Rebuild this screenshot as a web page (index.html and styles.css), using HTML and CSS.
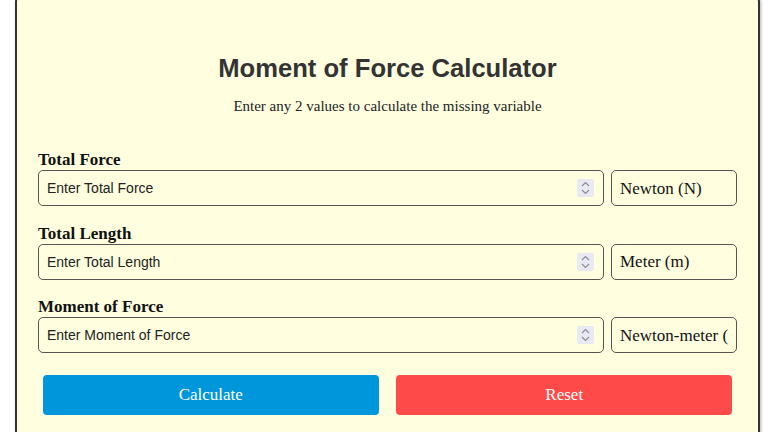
FILE: index.html
```html
<!DOCTYPE html>
<html lang="en">
  <head>
    <meta charset="utf-8">
    <meta name="viewport" content="width=device-width, initial-scale=1">
    <title>Moment of Force Calculator</title>
    <link rel="stylesheet" href="styles.css">
  </head>
  <body>

    <div class="calc">
      <h1 class="calc__title">Moment of Force Calculator</h1>
      <p class="calc__hint">Enter any 2 values to calculate the missing variable</p>

      <!-- Сила -->
      <div class="calc__field">
        <label class="calc__label" for="force">Total Force</label>
        <div class="calc__row">
          <div class="calc__box">
            <input id="force" class="calc__input" type="number" placeholder="Enter Total Force">
            <span class="calc__spin"><svg width="9" height="14" viewBox="0 0 9 14"><path d="M1 5 4.5 1.5 8 5M1 9l3.5 3.5L8 9" fill="none" stroke="#8a8a96" stroke-width="1.1"/></svg></span>
          </div>
          <select class="calc__unit">
            <option>Newton (N)</option>
          </select>
        </div>
      </div>

      <!-- Довжина -->
      <div class="calc__field">
        <label class="calc__label" for="length">Total Length</label>
        <div class="calc__row">
          <div class="calc__box">
            <input id="length" class="calc__input" type="number" placeholder="Enter Total Length">
            <span class="calc__spin"><svg width="9" height="14" viewBox="0 0 9 14"><path d="M1 5 4.5 1.5 8 5M1 9l3.5 3.5L8 9" fill="none" stroke="#8a8a96" stroke-width="1.1"/></svg></span>
          </div>
          <select class="calc__unit">
            <option>Meter (m)</option>
          </select>
        </div>
      </div>

      <!-- Момент -->
      <div class="calc__field">
        <label class="calc__label" for="moment">Moment of Force</label>
        <div class="calc__row">
          <div class="calc__box">
            <input id="moment" class="calc__input" type="number" placeholder="Enter Moment of Force">
            <span class="calc__spin"><svg width="9" height="14" viewBox="0 0 9 14"><path d="M1 5 4.5 1.5 8 5M1 9l3.5 3.5L8 9" fill="none" stroke="#8a8a96" stroke-width="1.1"/></svg></span>
          </div>
          <select class="calc__unit">
            <option>Newton-meter (N·m)</option>
          </select>
        </div>
      </div>

      <div class="calc__buttons">
        <button class="calc__button type-calc">Calculate</button>
        <button class="calc__button type-reset">Reset</button>
      </div>
    </div>

  </body>
</html>
```

FILE: styles.css
```css
body {
  margin: 0;
  font-family: "Liberation Serif", "Times New Roman", serif;
  background: #fff;
}

.calc {
  margin: -8px 8px 0 15px;
  padding: 60px 21px 40px;
  background: #ffffe0;
  border: 2px solid #333;
  border-radius: 10px;
  box-shadow: 1px 1px 3px rgba(0, 0, 0, .3);
}

.calc__title {
  margin: 0;
  text-align: center;
  font-family: "Liberation Sans", Arial, sans-serif;
  font-size: 25.6px;
  color: #333;
}

.calc__hint {
  margin: 15px 0 35px;
  text-align: center;
  font-size: 15px;
  color: #222;
}

.calc__field { margin-bottom: 17.5px; }

.calc__label {
  display: block;
  font-weight: bold;
  font-size: 17px;
  color: #111;
}

.calc__row {
  display: flex;
  gap: 7px;
}

.calc__box {
  position: relative;
  flex: 1;
  display: flex;
}

.calc__input {
  flex: 1;
  height: 36px;
  box-sizing: border-box;
  padding: 0 8px;
  background: transparent;
  border: 1px solid #555;
  border-radius: 5px;
  font-size: 14px;
  color: #222;
  appearance: textfield;
}

.calc__input::placeholder { color: #222; }

.calc__input::-webkit-inner-spin-button,
.calc__input::-webkit-outer-spin-button {
  -webkit-appearance: none;
  margin: 0;
}

.calc__spin {
  position: absolute;
  top: 9px;
  right: 10px;
  width: 17px;
  height: 18px;
  display: flex;
  align-items: center;
  justify-content: center;
  background: #e9e9f1;
  border-radius: 2px;
}

.calc__unit {
  width: 126px;
  height: 36px;
  box-sizing: border-box;
  padding: 0 8px;
  appearance: none;
  background: transparent;
  border: 1px solid #555;
  border-radius: 5px;
  font-family: inherit;
  font-size: 17px;
  color: #111;
}

.calc__buttons {
  display: flex;
  justify-content: space-between;
  margin-top: 22px;
}

.calc__button {
  width: 48%;
  height: 40px;
  margin: 0 5px;
  border: 0;
  border-radius: 4px;
  font-family: inherit;
  font-size: 17px;
  color: #fff;
}

.calc__button.type-calc  { background: #0096db; }
.calc__button.type-reset { background: #ff4a4a; }
```
